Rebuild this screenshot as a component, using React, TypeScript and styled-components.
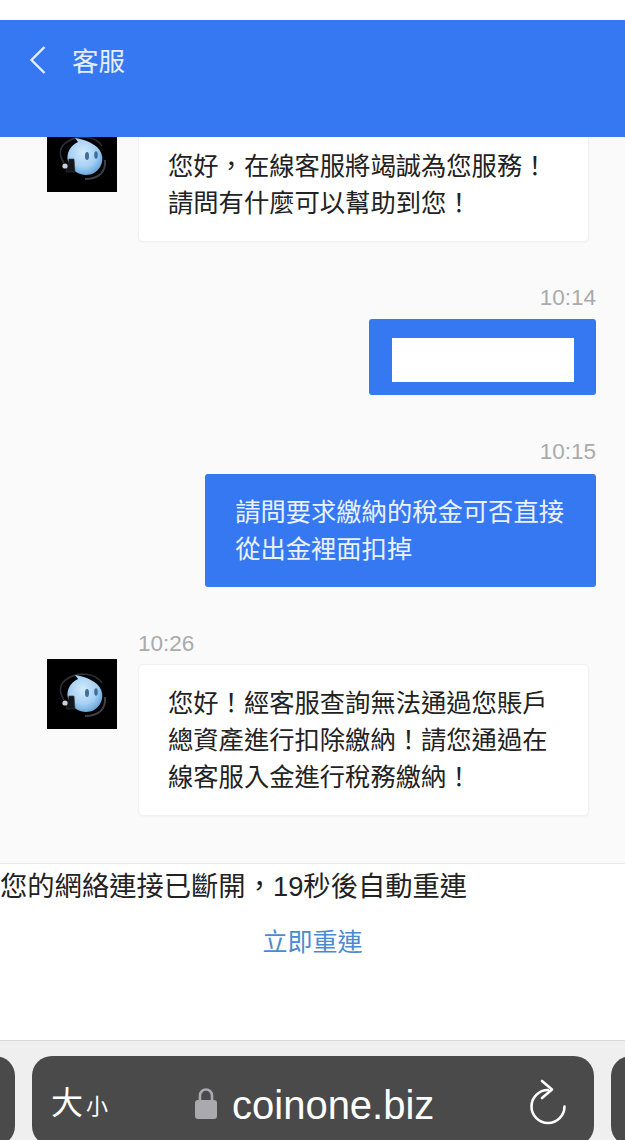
import React from 'react'
import styled, { createGlobalStyle } from 'styled-components'

const GlobalStyle = createGlobalStyle`
  html, body {
    margin: 0;
    padding: 0;
    height: 1140px;
    overflow: hidden;
    background: #fff;
    font-family: "Liberation Sans", "Noto Sans CJK TC", sans-serif;
  }
  * { box-sizing: border-box; }
`

const Page = styled.div`
  width: 625px;
  height: 1140px;
  display: flex;
  flex-direction: column;
  overflow: hidden;
`

const Header = styled.header`
  margin-top: 20px;
  height: 117px;
  flex: none;
  background: #3578f2;
  color: #e4eeff;
  display: flex;
  align-items: flex-start;
  gap: 24px;
  padding: 25px 0 0 28px;
  position: relative;
  z-index: 1;
`

const Title = styled.h1`
  margin: 0;
  font-size: 26.5px;
  line-height: 34px;
  font-weight: 400;
`

const Chat = styled.main`
  flex: 1;
  min-height: 0;
  background: #fafafa;
  padding: 0 29px 0 47px;
  display: flex;
  flex-direction: column;
`

const Row = styled.div<{ $first?: boolean }>`
  display: flex;
  align-items: flex-start;
  gap: 21px;
  margin-top: ${p => (p.$first ? '-15px' : '3px')};
`

const AvatarBox = styled.svg`
  width: 70px;
  height: 70px;
  flex: none;
  display: block;
  background: #000;
`

const Bubble = styled.div`
  margin-top: 5px;
  width: 451px;
  padding: 20px 29px 19px 29px;
  background: #fff;
  border: 1px solid #f0f0f0;
  border-radius: 5px;
  box-shadow: 0 1px 2px rgba(0, 0, 0, 0.03);
  color: #222;
  font-size: 25.3px;
  line-height: 37px;
  white-space: nowrap;
`

const Time = styled.div<{ $left?: boolean; $gap: number }>`
  margin-top: ${p => p.$gap}px;
  margin-left: ${p => (p.$left ? '91px' : '0')};
  align-self: ${p => (p.$left ? 'flex-start' : 'flex-end')};
  color: #aaa;
  font-size: 22.5px;
  line-height: 24px;
`

const Sent = styled.div`
  margin-top: 10px;
  align-self: flex-end;
  background: #3578f2;
  border-radius: 3px;
  color: #eaf1ff;
  font-size: 25.3px;
  line-height: 37px;
  padding: 20px 32px 19px 30px;
`

const SentMasked = styled(Sent)`
  margin-top: 9px;
  padding: 19px 22px 13px 23px;
`

const Masked = styled.div`
  width: 182px;
  height: 44px;
  background: #fff;
`

const Footer = styled.section`
  height: 177px;
  flex: none;
  background: #fff;
  border-top: 1px solid #e9e9e9;
  display: flex;
  flex-direction: column;
`

const Notice = styled.p`
  margin: 7px 0 0;
  font-size: 27.3px;
  line-height: 32px;
  color: #222;
  white-space: nowrap;
`

const Reconnect = styled.a`
  margin-top: 22px;
  align-self: center;
  font-size: 25px;
  line-height: 34px;
  color: #4a8ad0;
`

const BrowserBar = styled.footer`
  height: 100px;
  flex: none;
  background: #efefef;
  border-top: 1px solid #d9d9d9;
  padding-top: 15px;
  display: flex;
  gap: 17px;
  margin-left: -547px;
`

const Tab = styled.div`
  width: 562px;
  flex: none;
  height: 90px;
  background: #4a4a4a;
  border-radius: 20px;
`

const AddressBar = styled(Tab)`
  display: flex;
  align-items: center;
  padding: 7px 28px 0 19px;
  color: #fff;
  position: relative;
`

const TextSize = styled.div`
  display: flex;
  align-items: baseline;
  gap: 3px;
  width: 144px;
  font-size: 32px;
  line-height: 40px;
  small {
    font-size: 22px;
  }
`

const Url = styled.div`
  display: flex;
  align-items: center;
  gap: 15px;
  flex: 1;
  font-size: 40px;
  line-height: 46px;
`

const LockIcon = styled.svg`
  margin-top: -3px;
`

const Avatar = () => (
  <AvatarBox viewBox="0 0 70 70">
    <defs>
      <radialGradient id="blob" cx="45%" cy="40%" r="65%">
        <stop offset="0%" stopColor="#d5eafb" />
        <stop offset="60%" stopColor="#a5d0f3" />
        <stop offset="100%" stopColor="#5f9fd8" />
      </radialGradient>
    </defs>
    <path d="M17 41C11 32 13 24 20 20C30 13 48 13 55 24" fill="none" stroke="#2b3138" strokeWidth="1.6" />
    <path d="M28 16L31 20C22 24 18 34 22 42C26 51 38 56 47 51C57 45 58 32 50 25C44 20 36 17 28 16Z" fill="url(#blob)" />
    <ellipse cx="40" cy="34" rx="2" ry="4" fill="#3f6f9c" />
    <ellipse cx="49" cy="33" rx="1.8" ry="3.8" fill="#3f6f9c" />
    <path d="M22 37L27 37L28 50L19 50Z" fill="#14171a" stroke="#333" strokeWidth="0.6" />
    <circle cx="18" cy="44" r="2.6" fill="#c9d2d8" />
    <path d="M58 38C59 50 52 57 38 57" fill="none" stroke="#3a4046" strokeWidth="2" />
  </AvatarBox>
)

const Back = () => (
  <svg width="20" height="30" viewBox="0 0 20 30" fill="none" stroke="#e4eeff" strokeWidth="2.4">
    <path d="M16.5 2L3.5 15L16.5 28" />
  </svg>
)

const Lock = () => (
  <LockIcon width="22" height="32" viewBox="0 0 22 32">
    <path d="M5 15V8.5a6 6 0 0 1 12 0V15" fill="none" stroke="#a9a9ae" strokeWidth="2.6" />
    <rect x="0" y="13" width="22" height="19" rx="3" fill="#a9a9ae" />
  </LockIcon>
)

const Reload = () => (
  <svg width="38" height="46" viewBox="0 0 38 46" fill="none" stroke="#fff" strokeWidth="2.6" strokeLinecap="round" strokeLinejoin="round" style={{ position: 'absolute', left: 497, top: 23 }}>
    <path d="M19 11A16.5 16.5 0 1 0 35.5 27.5" />
    <path d="M13 2L23 10.5L13 19" />
  </svg>
)

// full-width punctuation, the reply text is CJK
const COMMA = '\uFF0C'
const BANG = '\uFF01'

export default function App() {
  return (
    <Page>
      <GlobalStyle />
      <Header>
        <Back />
        <Title>客服</Title>
      </Header>
      <Chat>
        <Row $first>
          <Avatar />
          <Bubble>您好{COMMA}在線客服將竭誠為您服務{BANG}<br />請問有什麼可以幫助到您{BANG}</Bubble>
        </Row>
        <Time $gap={44}>10:14</Time>
        <SentMasked><Masked /></SentMasked>
        <Time $gap={45}>10:15</Time>
        <Sent>請問要求繳納的稅金可否直接<br />從出金裡面扣掉</Sent>
        <Time $left $gap={45}>10:26</Time>
        <Row>
          <Avatar />
          <Bubble>您好{BANG}經客服查詢無法通過您賬戶<br />總資產進行扣除繳納{BANG}請您通過在<br />線客服入金進行稅務繳納{BANG}</Bubble>
        </Row>
      </Chat>
      <Footer>
        <Notice>您的網絡連接已斷開{COMMA}19秒後自動重連</Notice>
        <Reconnect>立即重連</Reconnect>
      </Footer>
      <BrowserBar>
        <Tab />
        <AddressBar>
          <TextSize>大<small>小</small></TextSize>
          <Url><Lock />coinone.biz</Url>
          <Reload />
        </AddressBar>
        <Tab />
      </BrowserBar>
    </Page>
  )
}
